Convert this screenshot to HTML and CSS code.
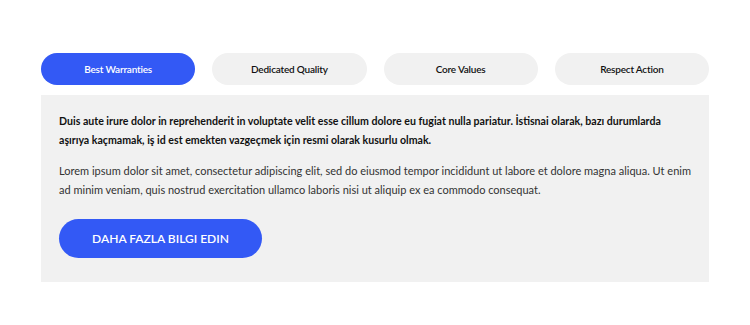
FILE: index.html
```html
<!DOCTYPE html>
<html>
<head>
<meta charset="utf-8">
<link rel="stylesheet" href="styles.css">
</head>
<body>
<div class="wrap">
  <div class="tabs">
    <div class="tab active">Best Warranties</div>
    <div class="tab">Dedicated Quality</div>
    <div class="tab">Core Values</div>
    <div class="tab">Respect Action</div>
  </div>
  <div class="panel">
    <p class="lead">Duis aute irure dolor in reprehenderit in voluptate velit esse cillum dolore eu fugiat nulla pariatur. İstisnai olarak, bazı durumlarda aşırıya kaçmamak, iş id est emekten vazgeçmek için resmi olarak kusurlu olmak.</p>
    <p class="body">Lorem ipsum dolor sit amet, consectetur adipiscing elit, sed do eiusmod tempor incididunt ut labore et dolore magna aliqua. Ut enim ad minim veniam, quis nostrud exercitation ullamco laboris nisi ut aliquip ex ea commodo consequat.</p>
    <div class="btn">DAHA FAZLA BILGI EDIN</div>
  </div>
</div>
</body>
</html>
```
FILE: styles.css
```css
* { box-sizing: border-box; }
body { margin: 0; background: #fff; font-family: "Lato", "Open Sans", sans-serif; }
.wrap { padding: 53px 41px 0; }
.tabs { display: grid; grid-template-columns: repeat(4, 1fr); column-gap: 17px; }
.tab { height: 32px; border-radius: 16px; background: #f1f1f1; color: #111; font-size: 10px; font-weight: 600; letter-spacing: -0.2px; display: flex; align-items: center; justify-content: center; }
.tab.active { background: #3359f5; color: #fff; }
.panel { margin-top: 10px; background: #f1f1f1; padding: 17px 10px 24px 18px; }
.lead { margin: 0; max-width: 622px; font-size: 10.6px; font-weight: 700; color: #111; line-height: 19px; }
.body { margin: 11px 0 0; font-size: 11px; color: #333; line-height: 19px; }
.btn { margin-top: 20px; width: 203px; height: 39px; border-radius: 20px; background: #3359f5; color: #fff; font-size: 12px; font-weight: 600; display: flex; align-items: center; justify-content: center; }
```
